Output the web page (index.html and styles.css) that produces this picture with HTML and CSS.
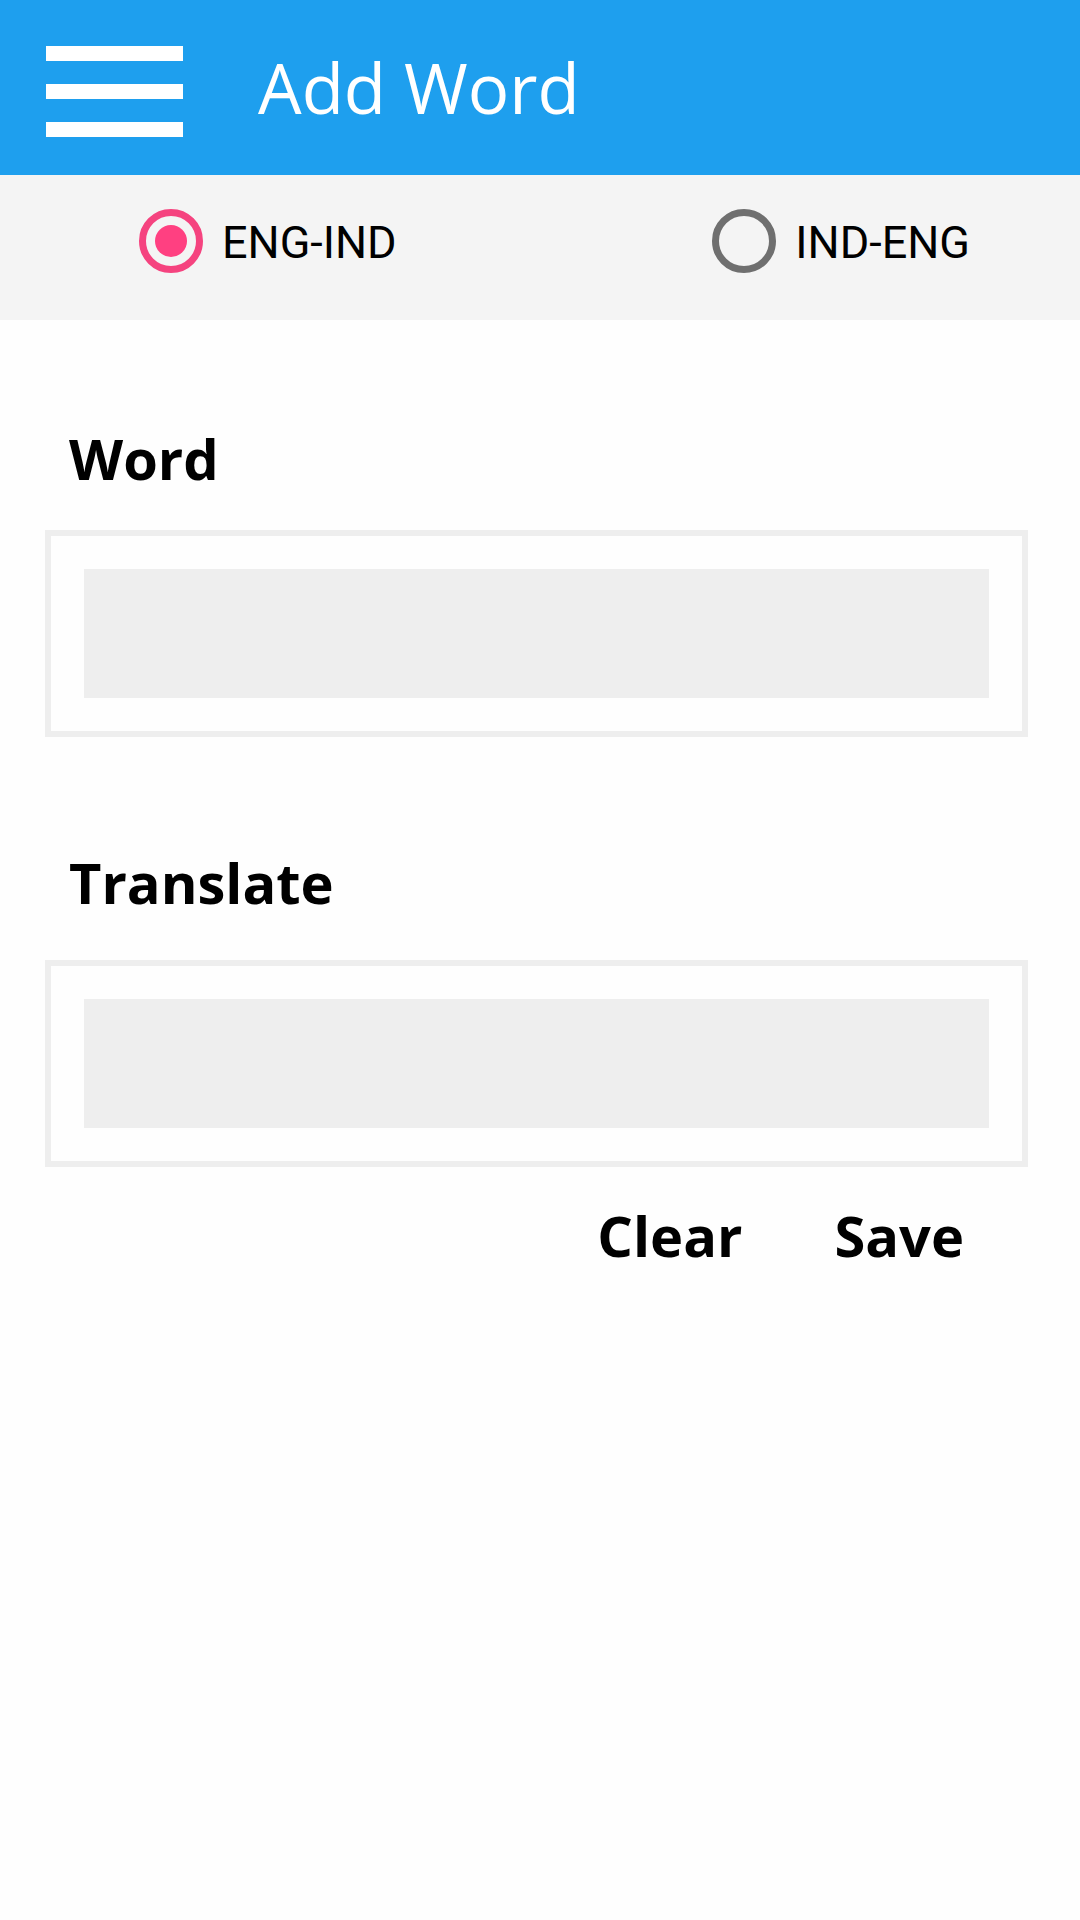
FILE: index.html
```html
<!DOCTYPE html>
<html lang="en">
<head>
  <meta charset="utf-8">
  <meta name="viewport" content="width=device-width, initial-scale=1">
  <title>Add Word</title>
  <link rel="stylesheet" href="styles.css">
</head>
<body>
  <header class="app-bar">
    <button class="menu-button" type="button" aria-label="Menu">
      <span class="menu-line"></span>
      <span class="menu-line"></span>
      <span class="menu-line"></span>
    </button>
    <h1 class="app-title">Add Word</h1>
  </header>
  <form class="word-form">
    <div class="directions" role="radiogroup" aria-label="Direction">
      <label class="direction"><input class="radio" type="radio" name="direction" value="eng-ind" checked>ENG-IND</label>
      <label class="direction"><input class="radio" type="radio" name="direction" value="ind-eng">IND-ENG</label>
    </div>
    <main class="content">
      <div class="field">
        <label class="field-label" for="word">Word</label>
        <input class="field-input" id="word" type="text">
      </div>
      <div class="field field-translate">
        <label class="field-label" for="translate">Translate</label>
        <input class="field-input" id="translate" type="text">
      </div>
      <div class="actions">
        <button class="action" type="reset">Clear</button>
        <button class="action" type="button">Save</button>
      </div>
    </main>
  </form>
</body>
</html>
```

FILE: styles.css
```css
* {
  box-sizing: border-box;
}

body {
  margin: 0;
  min-height: 100vh;
  background: #fefefe;
  color: #000;
  font-family: "Open Sans", "Noto Sans", sans-serif;
}

button {
  padding: 0;
  border: 0;
  background: none;
  color: inherit;
  font: inherit;
  cursor: pointer;
}

.app-bar {
  display: flex;
  align-items: flex-start;
  gap: 75px;
  padding: 39px 46px 38px;
  background: #1e9fee;
  color: #fff;
}

.menu-button {
  display: flex;
  flex-direction: column;
  gap: 23px;
  width: 137px;
  padding-top: 7px;
}

.menu-line {
  width: 100%;
  height: 15px;
  background: #fff;
}

.app-title {
  margin: 0;
  font-size: 69px;
  font-weight: 400;
  line-height: 96px;
}

.directions {
  display: flex;
  justify-content: space-between;
  padding: 34px 110px 43px 139px;
  background: #f4f4f4;
}

.direction {
  display: flex;
  align-items: flex-start;
  gap: 19px;
  font-family: Roboto, sans-serif;
  font-size: 45px;
  line-height: 68px;
}

.radio {
  appearance: none;
  display: grid;
  place-items: center;
  width: 64px;
  height: 64px;
  margin: 0;
  border: 7px solid #6f6f6f;
  border-radius: 50%;
}

.radio:checked {
  border-color: #f5437f;
}

.radio:checked::before {
  content: "";
  width: 32px;
  height: 32px;
  border-radius: 50%;
  background: #ff4081;
}

.content {
  padding: 100px 52px 0 45px;
}

.field {
  display: flex;
  flex-direction: column;
  gap: 34px;
}

.field-translate {
  gap: 40px;
  margin-top: 107px;
}

.field-label {
  padding-left: 24px;
  font-size: 56px;
  font-weight: 700;
  line-height: 76px;
}

.field-input {
  width: 100%;
  height: 207px;
  padding: 33px;
  border: 6px solid #eee;
  border-radius: 0;
  background: #eee content-box;
  font: inherit;
  font-size: 56px;
}

.actions {
  display: flex;
  justify-content: flex-end;
  gap: 92px;
  padding: 30px 64px 0 0;
}

.action {
  font-size: 56px;
  font-weight: 700;
  line-height: 76px;
}
```
